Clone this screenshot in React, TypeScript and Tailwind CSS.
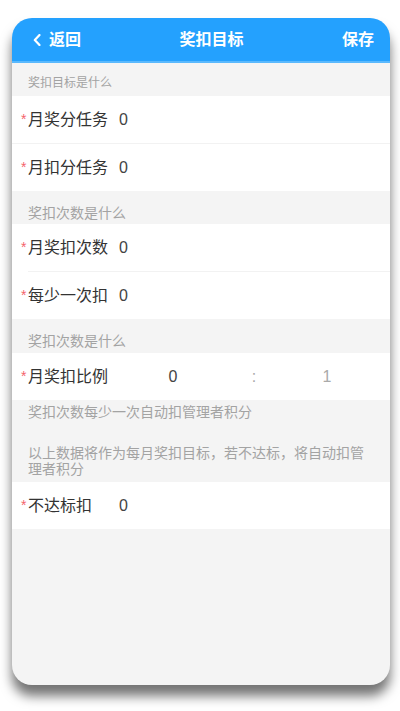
import React from "react";

const font = { fontFamily: '"Liberation Sans", "Noto Sans CJK SC", sans-serif' };

function Row({ label, value, divider, inset }: { label: string; value: string; divider?: boolean; inset?: boolean }) {
  return (
    <div className="bg-white">
      <div className="flex h-[47px] items-center pl-[9px]">
        <span className="w-[7px] text-[14px] text-[#f4636b]">*</span>
        <span className="w-[91px] text-[16px] text-[#333]">{label}</span>
        <span className="text-[16px] text-[#444]">{value}</span>
      </div>
      {divider && <div className={`h-px bg-[#f2f2f2] ${inset ? "ml-[16px]" : ""}`} />}
    </div>
  );
}

function Section({ title, small }: { title: string; small?: boolean }) {
  return (
    <div
      className={`h-[33px] pl-[16px] pt-[12px] text-[#a3a3a3] ${small ? "text-[12px] leading-[16px]" : "text-[14px] leading-[20px]"}`}
    >
      {title}
    </div>
  );
}

export default function App() {
  return (
    <div className="h-[711px] w-[400px] overflow-hidden bg-white pl-[12px] pt-[18px]" style={font}>
      <div className="flex h-[667px] w-[378px] flex-col overflow-hidden rounded-[20px] bg-[#f4f4f4] shadow-[0_11px_12px_rgba(0,0,0,0.55)]">
        <header className="flex h-[45px] shrink-0 items-center justify-between border-b-2 border-[#5ab9fd] bg-[#24a1fe] pl-[21px] pr-[16px] text-white">
          <div className="flex items-center">
            <svg width="8" height="12" viewBox="0 0 8 12" className="mr-[8px]">
              <path d="M6.5 1 L1.8 6 L6.5 11" fill="none" stroke="white" strokeWidth="2.2" strokeLinecap="round" strokeLinejoin="round" />
            </svg>
            <span className="text-[16px] font-bold">返回</span>
          </div>
          <span className="text-[16px] font-bold">奖扣目标</span>
          <span className="text-[16px] font-bold">保存</span>
        </header>

        <Section title="奖扣目标是什么" small />
        <Row label="月奖分任务" value="0" divider />
        <Row label="月扣分任务" value="0" />

        <Section title="奖扣次数是什么" />
        <Row label="月奖扣次数" value="0" divider inset />
        <Row label="每少一次扣" value="0" />

        <div className="h-[34px] pl-[16px] pt-[12px] text-[14px] leading-[20px] text-[#a3a3a3]">奖扣次数是什么</div>
        <div className="flex h-[47px] items-center bg-white pl-[9px]">
          <span className="w-[7px] text-[14px] text-[#f4636b]">*</span>
          <span className="w-[91px] text-[16px] text-[#333]">月奖扣比例</span>
          <span className="w-[108px] text-center text-[16px] text-[#444]">0</span>
          <span className="w-[54px] text-center text-[16px] text-[#aaa]">:</span>
          <span className="w-[92px] text-center text-[16px] text-[#aaa]">1</span>
        </div>

        <div className="h-[82px] pl-[16px] pr-[16px] pt-[4px] text-[14px] leading-[16px] text-[#a3a3a3]">
          <p>奖扣次数每少一次自动扣管理者积分</p>
          <p className="mt-[25px]">以上数据将作为每月奖扣目标，若不达标，将自动扣管理者积分</p>
        </div>

        <Row label="不达标扣" value="0" />
      </div>
    </div>
  );
}
